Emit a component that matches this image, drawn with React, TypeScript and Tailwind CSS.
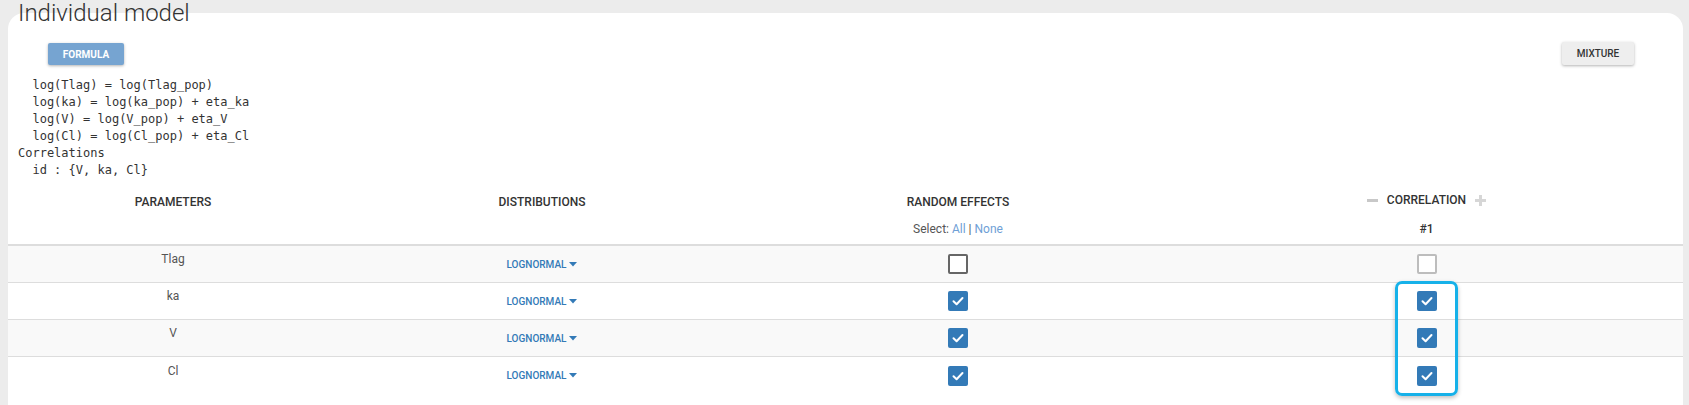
import React from "react";

const rows = [
  { name: "Tlag", re: false, corr: false },
  { name: "ka", re: true, corr: true },
  { name: "V", re: true, corr: true },
  { name: "Cl", re: true, corr: true },
];

const code = `  log(Tlag) = log(Tlag_pop)
  log(ka) = log(ka_pop) + eta_ka
  log(V) = log(V_pop) + eta_V
  log(Cl) = log(Cl_pop) + eta_Cl
Correlations
  id : {V, ka, Cl}`;

function Box({ checked, light }: { checked: boolean; light?: boolean }) {
  if (checked) {
    return (
      <div className="w-[20px] h-[20px] rounded-[2px] bg-[#337ab7] flex items-center justify-center">
        <svg width="20" height="20" viewBox="0 0 20 20">
          <polyline
            points="5.5,10.2 8.6,13.2 14.5,7"
            fill="none"
            stroke="#fff"
            strokeWidth="2"
            strokeLinecap="round"
            strokeLinejoin="round"
          />
        </svg>
      </div>
    );
  }
  return (
    <div
      className={
        light
          ? "w-[20px] h-[20px] rounded-[2px] border-2 border-[#bdbdbd] bg-white"
          : "w-[20px] h-[20px] rounded-[2px] border-2 border-[#666666] bg-white"
      }
    />
  );
}

export default function App() {
  return (
    <div
      className="w-[1689px] h-[405px] overflow-hidden bg-[#ececec]"
      style={{ fontFamily: "Roboto, 'Liberation Sans', sans-serif" }}
    >
      <div className="relative z-10 pl-[18px] text-[24px] leading-[26px] font-light text-[#333]">
        Individual model
      </div>
      <div className="-mt-[13px] ml-[8px] mr-[6px] h-[420px] bg-white rounded-t-[16px]">
        <div className="flex justify-between items-start pl-[40px] pr-[49px] pt-[30px] h-[52px]">
          <div className="w-[76px] h-[22px] rounded-[2px] bg-[#76a4d1] text-white text-[10px] font-bold flex items-center justify-center shadow-[0_1px_3px_rgba(0,0,0,0.3)]">
            FORMULA
          </div>
          <div className="w-[72px] h-[23px] -mt-[1px] rounded-[2px] bg-[#eeeeee] text-[#333] text-[10px] font-medium flex items-center justify-center shadow-[0_1px_3px_rgba(0,0,0,0.3)]">
            MIXTURE
          </div>
        </div>
        <pre
          className="mt-[12px] pl-[10px] text-[12px] leading-[17px] text-[#333]"
          style={{ fontFamily: "'DejaVu Sans Mono', monospace" }}
        >
          {code}
        </pre>
        <div className="grid grid-cols-[330px_408px_424px_1fr] border-b-2 border-[#dddddd] h-[67px] text-[#333]">
          <div className="flex flex-col items-center pt-[15px]">
            <div className="text-[12px] leading-[16px] font-medium">PARAMETERS</div>
          </div>
          <div className="flex flex-col items-center pt-[15px]">
            <div className="text-[12px] leading-[16px] font-medium">DISTRIBUTIONS</div>
          </div>
          <div className="flex flex-col items-center pt-[15px]">
            <div className="text-[12px] leading-[16px] font-medium">RANDOM EFFECTS</div>
            <div className="mt-[11px] text-[12px] leading-[16px] text-[#555]">
              Select: <span className="text-[#6f9fd6]">All</span> | <span className="text-[#6f9fd6]">None</span>
            </div>
          </div>
          <div className="flex flex-col items-center pt-[13px]">
            <div className="flex items-center gap-[9px]">
              <svg width="11" height="11" viewBox="0 0 11 11">
                <rect x="0" y="4" width="11" height="3" fill="#c8c8c8" />
              </svg>
              <div className="text-[12px] leading-[16px] font-medium">CORRELATION</div>
              <svg width="11" height="11" viewBox="0 0 11 11">
                <rect x="0" y="4" width="11" height="3" fill="#d6d6d6" />
                <rect x="4" y="0" width="3" height="11" fill="#d6d6d6" />
              </svg>
            </div>
            <div className="mt-[13px] text-[12px] leading-[16px] font-medium">#1</div>
          </div>
        </div>
        <div className="relative">
          {rows.map((r, i) => (
            <div
              key={r.name}
              className={
                (i % 2 === 0 ? "bg-[#f9f9f9] " : "bg-white ") +
                (i < rows.length - 1 ? "border-b border-[#dddddd] " : "") +
                "grid grid-cols-[330px_408px_424px_1fr] h-[37px]"
              }
            >
              <div className="flex items-center justify-center pb-[10px] text-[12px] text-[#555]">{r.name}</div>
              <div className="flex items-center justify-center text-[10px] font-medium text-[#337ab7]">
                LOGNORMAL
                <svg className="ml-[3px]" width="8" height="5" viewBox="0 0 8 5">
                  <polygon points="0,0 8,0 4,4.5" fill="#337ab7" />
                </svg>
              </div>
              <div className="flex items-center justify-center">
                <Box checked={r.re} />
              </div>
              <div className="flex items-center justify-center">
                <Box checked={r.corr} light />
              </div>
            </div>
          ))}
          <div className="absolute left-[1387px] top-[35px] w-[63px] h-[115px] rounded-[7px] border-[3px] border-[#16b1e9] shadow-[0_2px_4px_rgba(0,0,0,0.25)]" />
        </div>
      </div>
    </div>
  );
}
